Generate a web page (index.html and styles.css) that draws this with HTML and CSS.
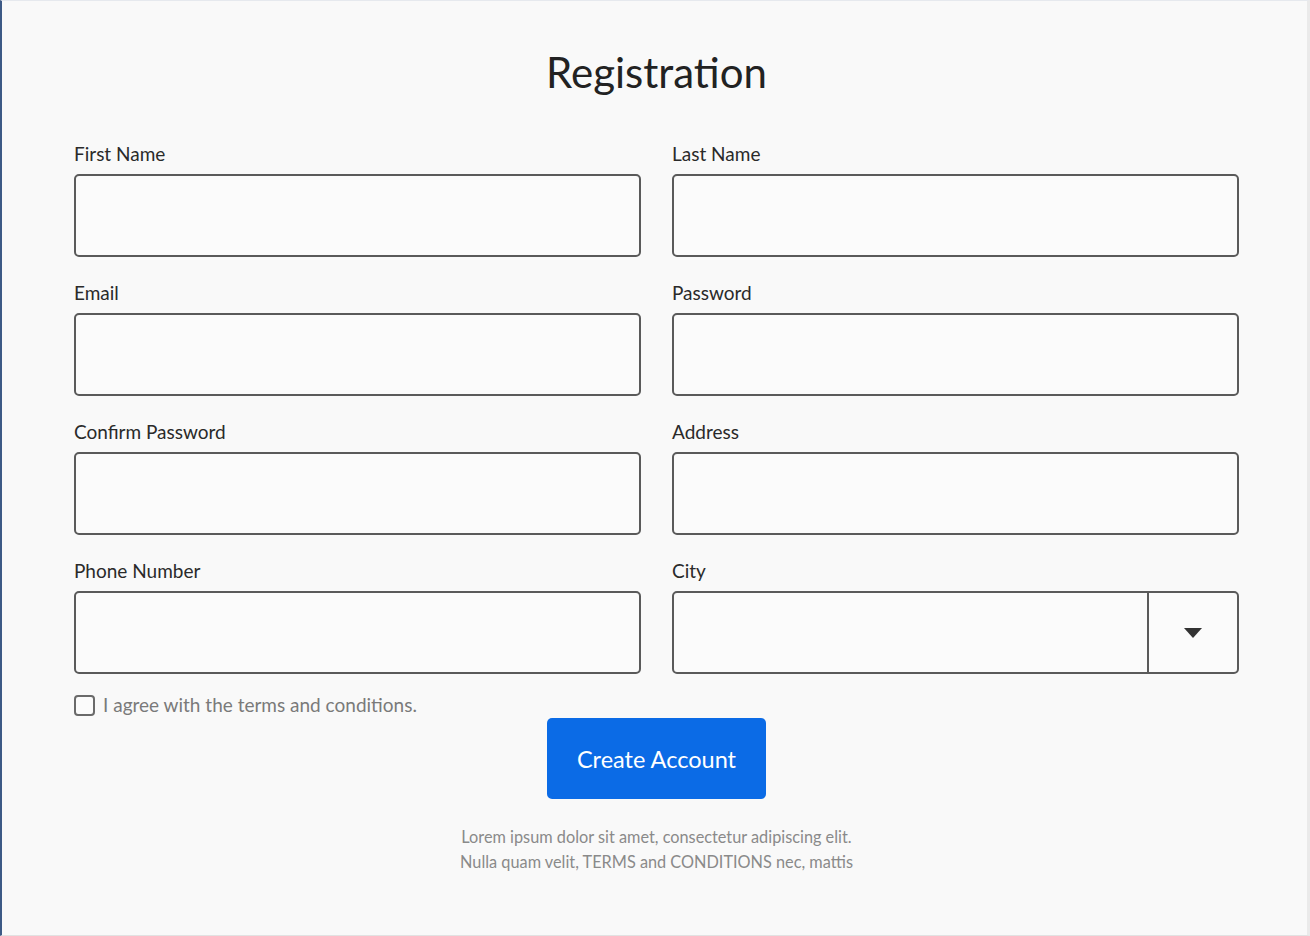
FILE: index.html
```html
<!DOCTYPE html>
<html lang="en">
<head>
    <meta charset="UTF-8">
    <meta name="viewport" content="width=device-width, initial-scale=1.0">
    <title>Registration</title>
    <link rel="stylesheet" href="styles.css">
</head>
<body>

<div class="page">
    <h1>Registration</h1>

    <form class="reg-form" onsubmit="return false;">
        <div class="fields">
            <div class="field">
                <label for="first">First Name</label>
                <input type="text" id="first">
            </div>
            <div class="field">
                <label for="last">Last Name</label>
                <input type="text" id="last">
            </div>
            <div class="field">
                <label for="email">Email</label>
                <input type="email" id="email">
            </div>
            <div class="field">
                <label for="pass">Password</label>
                <input type="password" id="pass">
            </div>
            <div class="field">
                <label for="confirm">Confirm Password</label>
                <input type="password" id="confirm">
            </div>
            <div class="field">
                <label for="address">Address</label>
                <input type="text" id="address">
            </div>
            <div class="field">
                <label for="phone">Phone Number</label>
                <input type="tel" id="phone">
            </div>
            <div class="field">
                <label for="city">City</label>
                <div class="select-box">
                    <div class="select-value" id="city"></div>
                    <div class="select-arrow">
                        <svg width="20" height="12" viewBox="0 0 20 12"><path d="M1 1 L19 1 L10 11 Z" fill="#333"/></svg>
                    </div>
                </div>
            </div>
        </div>

        <label class="agree">
            <span class="check"></span>
            <span>I agree with the terms and conditions.</span>
        </label>

        <div class="submit-row">
            <button type="submit">Create Account</button>
        </div>

        <p class="note">Lorem ipsum dolor sit amet, consectetur adipiscing elit.<br>Nulla quam velit, TERMS and CONDITIONS nec, mattis</p>
    </form>
</div>

</body>
</html>
```

FILE: styles.css
```css
* {
    box-sizing: border-box;
}
body {
    margin: 0;
    padding: 0;
    font-family: Lato, 'Open Sans', sans-serif;
    background: #fff;
    color: #333;
}
.page {
    width: 1310px;
    height: 936px;
    background: #f9f9f9;
    border-left: 2px solid #3d5a86;
    border-top: 1px solid #e6e9ee;
    border-right: 3px solid #eaeaea;
    border-bottom: 1px solid #e2e2e2;
    padding: 46px 68px 0 72px;
    overflow: hidden;
}
h1 {
    margin: 0;
    text-align: center;
    font-size: 42px;
    font-weight: 400;
    line-height: 50px;
    color: #222;
}
.reg-form {
    margin-top: 46px;
}
.fields {
    display: grid;
    grid-template-columns: 1fr 1fr;
    column-gap: 31px;
    row-gap: 25px;
}
.field label {
    display: block;
    font-size: 19px;
    line-height: 22px;
    color: #2a2a2a;
    margin-bottom: 9px;
}
.field input,
.select-box {
    display: block;
    width: 100%;
    height: 83px;
    border: 2px solid #5a5a5a;
    border-radius: 5px;
    background: #fbfbfb;
    font-family: inherit;
    font-size: 18px;
    padding: 0 14px;
}
.select-box {
    display: flex;
    padding: 0;
}
.select-value {
    flex: 1;
}
.select-arrow {
    width: 90px;
    border-left: 2px solid #5a5a5a;
    display: flex;
    align-items: center;
    justify-content: center;
}
.agree {
    display: flex;
    align-items: center;
    gap: 8px;
    margin-top: 20px;
    font-size: 19px;
    line-height: 22px;
    color: #7a7a7a;
}
.check {
    width: 21px;
    height: 21px;
    border: 2px solid #6a6a6a;
    border-radius: 4px;
    background: #fbfbfb;
}
.submit-row {
    display: flex;
    justify-content: center;
    margin-top: 2px;
}
.submit-row button {
    width: 219px;
    height: 81px;
    border: none;
    border-radius: 5px;
    background: #0b6be6;
    color: #fff;
    font-family: inherit;
    font-size: 23.5px;
    cursor: pointer;
}
.note {
    margin: 25px 0 0;
    text-align: center;
    font-size: 16.3px;
    line-height: 25px;
    color: #8a8a8a;
}
```
